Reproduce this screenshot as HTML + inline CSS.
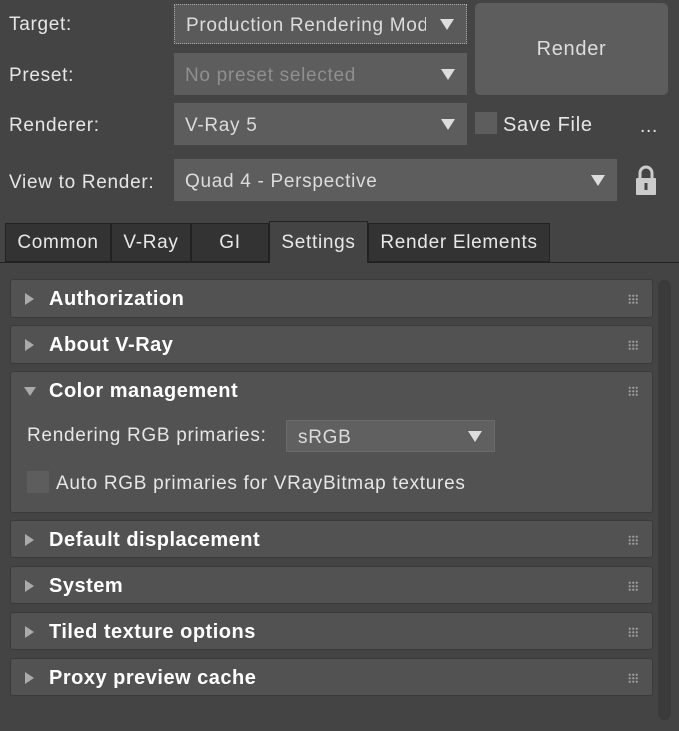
<!DOCTYPE html>
<html><head><style>
body{margin:0;width:679px;height:731px;background:#444;font-family:"Liberation Sans",sans-serif;color:#e6e6e6;position:relative;overflow:hidden;font-size:19px;letter-spacing:0.7px}
.a{position:absolute}
.lbl{position:absolute;left:9px}
.dd{position:absolute;background:#5d5d5d;box-sizing:border-box;padding-left:11px;padding-top:3px;display:flex;align-items:center;color:#dcdcdc;white-space:nowrap;overflow:hidden}
.dd .t{position:absolute;right:12px;top:50%;margin-top:-5px;width:0;height:0;border-left:7px solid transparent;border-right:7px solid transparent;border-top:11px solid #ddd}
.tab{position:absolute;top:223px;height:39px;background:#333;border:1px solid #222;box-sizing:border-box;display:flex;align-items:center;justify-content:center;color:#e8e8e8}
.p{position:absolute;left:10px;width:643px;background:#525252;border:1px solid #3a3a3a;border-radius:3px;box-sizing:border-box}
.p .h{position:absolute;left:38px;top:8px;font-weight:bold;font-size:20px;letter-spacing:0.5px;color:#fff}
.p .tri{position:absolute;left:14px;top:13px;width:0;height:0;border-top:6px solid transparent;border-bottom:6px solid transparent;border-left:9px solid #aaa}
.p .dots{position:absolute;right:14px;top:14px;width:10px;height:10px;background-image:radial-gradient(#999 1px,transparent 1.2px);background-size:3.5px 3.5px}
</style></head><body>
<div class="lbl" style="top:14px">Target:</div>
<div class="lbl" style="top:65px">Preset:</div>
<div class="lbl" style="top:115px">Renderer:</div>
<div class="lbl" style="top:172px">View to Render:</div>
<div class="dd" style="left:174px;top:4px;width:293px;height:40px;border:1px dotted #aaa;background:#5a5a5a;padding-right:40px"><span style="overflow:hidden;white-space:nowrap;width:242px;display:block">Production Rendering Mode</span><span class="t"></span></div>
<div class="dd" style="left:174px;top:53px;width:293px;height:42px;color:#8f8f8f">No preset selected<span class="t"></span></div>
<div class="dd" style="left:174px;top:103px;width:293px;height:42px">V-Ray 5<span class="t"></span></div>
<div class="dd" style="left:174px;top:159px;width:443px;height:42px">Quad 4 - Perspective<span class="t"></span></div>
<div class="a" style="left:475px;top:3px;width:193px;height:92px;background:#5d5d5d;border-radius:5px;display:flex;align-items:center;justify-content:center;color:#ddd;font-size:20px">Render</div>
<div class="a" style="left:475px;top:112px;width:22px;height:22px;background:#5d5d5d"></div>
<div class="a" style="left:503px;top:114px;font-size:20px">Save File</div>
<div class="a" style="left:640px;top:116px">...</div>
<svg class="a" style="left:632px;top:164px" width="28" height="32" viewBox="0 0 28 32"><path d="M8 14V9a6 6 0 0 1 12 0v5" fill="none" stroke="#ccc" stroke-width="3"/><rect x="4" y="14" width="20" height="17" rx="1" fill="#ccc"/><rect x="12.5" y="19" width="3" height="7" fill="#444"/></svg>
<div class="a" style="left:0;top:262px;width:679px;height:1px;background:#222"></div>
<div class="tab" style="left:5px;width:106px">Common</div>
<div class="tab" style="left:111px;width:80px">V-Ray</div>
<div class="tab" style="left:191px;width:78px">GI</div>
<div class="tab" style="left:269px;width:99px;top:221px;height:42px;background:#444;border-bottom:none">Settings</div>
<div class="tab" style="left:368px;width:182px">Render Elements</div>
<div class="a" style="left:658px;top:280px;width:13px;height:440px;background:#3b3b3b;border-radius:6px"></div>
<div class="p" style="top:279px;height:39px"><span class="tri"></span><span class="h">Authorization</span><span class="dots"></span></div>
<div class="p" style="top:325px;height:39px"><span class="tri"></span><span class="h">About V-Ray</span><span class="dots"></span></div>
<div class="p" style="top:371px;height:142px"><span class="tri" style="border:none;border-left:6px solid transparent;border-right:6px solid transparent;border-top:9px solid #aaa;top:15px;left:13px"></span><span class="h">Color management</span><span class="dots"></span>
<div class="a" style="left:16px;top:53px">Rendering RGB primaries:</div>
<div class="dd" style="left:275px;top:48px;width:209px;height:32px;background:#606060;border:1px solid #6a6a6a">sRGB<span class="t"></span></div>
<div class="a" style="left:16px;top:99px;width:22px;height:22px;background:#5d5d5d"></div>
<div class="a" style="left:45px;top:101px">Auto RGB primaries for VRayBitmap textures</div>
</div>
<div class="p" style="top:520px;height:38px"><span class="tri"></span><span class="h">Default displacement</span><span class="dots"></span></div>
<div class="p" style="top:566px;height:38px"><span class="tri"></span><span class="h">System</span><span class="dots"></span></div>
<div class="p" style="top:612px;height:38px"><span class="tri"></span><span class="h">Tiled texture options</span><span class="dots"></span></div>
<div class="p" style="top:658px;height:38px"><span class="tri"></span><span class="h">Proxy preview cache</span><span class="dots"></span></div>
</body></html>
